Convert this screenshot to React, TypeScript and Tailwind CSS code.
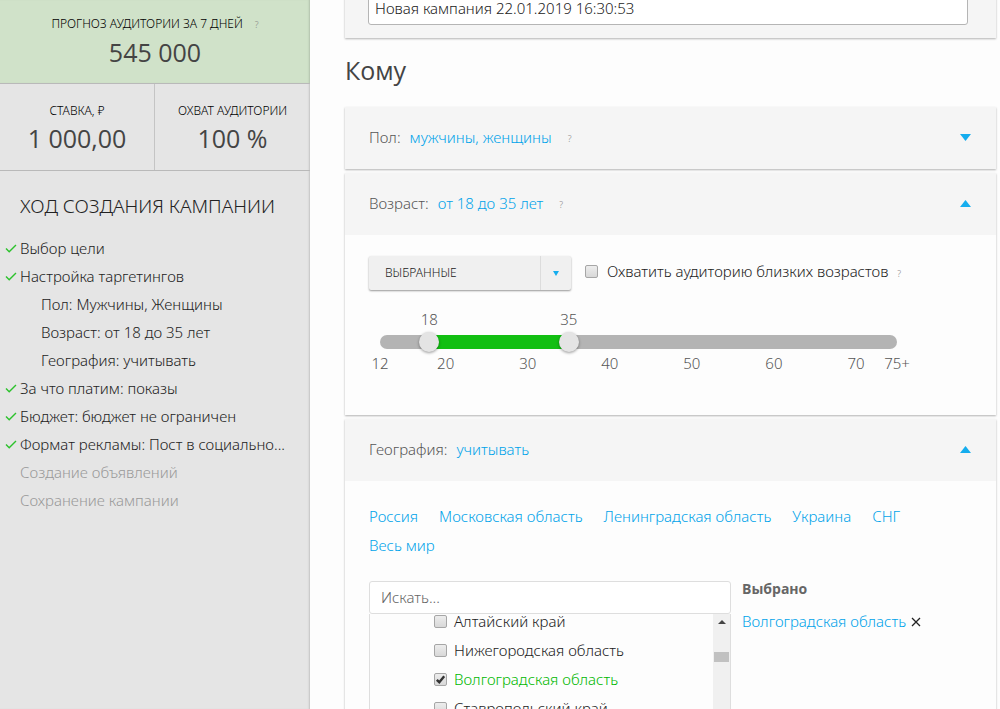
import React, { useState } from 'react';

interface Step {
  title: string;
  state: 'done' | 'sub' | 'todo';
}

const steps: Step[] = [
  { title: 'Выбор цели', state: 'done' },
  { title: 'Настройка таргетингов', state: 'done' },
  { title: 'Пол: Мужчины, Женщины', state: 'sub' },
  { title: 'Возраст: от 18 до 35 лет', state: 'sub' },
  { title: 'География: учитывать', state: 'sub' },
  { title: 'За что платим: показы', state: 'done' },
  { title: 'Бюджет: бюджет не ограничен', state: 'done' },
  { title: 'Формат рекламы: Пост в социально...', state: 'done' },
  { title: 'Создание объявлений', state: 'todo' },
  { title: 'Сохранение кампании', state: 'todo' },
];

const quickRegions = ['Россия', 'Московская область', 'Ленинградская область', 'Украина', 'СНГ', 'Весь мир'];

const regions = ['Алтайский край', 'Нижегородская область', 'Волгоградская область', 'Ставропольский край'];

const AGE_MIN = 12;
const AGE_MAX = 75;
const ticks = [12, 20, 30, 40, 50, 60, 70, 75];

const agePercent = (age: number) => ((age - AGE_MIN) / (AGE_MAX - AGE_MIN)) * 100;

const Hint = ({ className = '' }: { className?: string }) => (
  <span className={`text-[9px] text-[#858585] ${className}`}>?</span>
);

const CheckMark = () => (
  <svg className="w-3 h-3 shrink-0" viewBox="0 0 12 12" fill="none" stroke="#2cc22c" strokeWidth="1.4">
    <path d="M1 6.6 4.2 9.8 11 3" />
  </svg>
);

const Arrow = ({ up = false, className }: { up?: boolean; className: string }) => (
  <svg className={className} viewBox="0 0 12 8" fill="currentColor" preserveAspectRatio="none">
    <path d={up ? 'M0 8 6 0l6 8z' : 'M0 0h12L6 8z'} />
  </svg>
);

interface CheckboxProps {
  id: string;
  checked: boolean;
  onChange: () => void;
}

const Checkbox = ({ id, checked, onChange }: CheckboxProps) => (
  <span className="relative w-[13px] h-[13px] shrink-0">
    <input
      id={id}
      type="checkbox"
      checked={checked}
      onChange={onChange}
      className="block w-[13px] h-[13px] appearance-none rounded-[2px] border border-[#a6a6a6] bg-linear-to-b from-[#ededed] to-[#d8d8d8]"
    />
    {checked && (
      <svg className="absolute inset-0 w-[13px] h-[13px] pointer-events-none" viewBox="0 0 13 13" fill="none" stroke="#333" strokeWidth="2.4">
        <path d="M2.8 6.8 5.3 9.2 10.2 3.2" />
      </svg>
    )}
  </span>
);

interface PanelProps {
  label: string;
  value: string;
  hint?: boolean;
  open?: boolean;
  children?: React.ReactNode;
}

const Panel: React.FC<PanelProps> = ({ label, value, hint, open = false, children }) => (
  <section className="bg-[#fdfdfd] shadow-[0_1px_2px_rgba(0,0,0,0.3)]">
    <header className="h-[62px] pb-[2px] pl-6 pr-[25px] flex items-center bg-[#f5f5f5] text-[#555]">
      <span>{label}:</span>
      <button className="ml-[9px] text-[#00a3ea]">{value}</button>
      {hint && <Hint className="ml-4 mt-1" />}
      <button className="ml-auto text-[#15adee]" aria-label={open ? 'Свернуть' : 'Развернуть'}>
        <Arrow up={open} className="w-[11px] h-[7px]" />
      </button>
    </header>
    {children}
  </section>
);

const rangeClass =
  'absolute top-1/2 -translate-y-1/2 -left-[10px] w-[calc(100%+20px)] h-5 m-0 appearance-none bg-transparent pointer-events-none [&::-webkit-slider-thumb]:appearance-none [&::-webkit-slider-thumb]:pointer-events-auto [&::-webkit-slider-thumb]:w-5 [&::-webkit-slider-thumb]:h-5 [&::-webkit-slider-thumb]:rounded-full [&::-webkit-slider-thumb]:bg-[#e4e4e4] [&::-webkit-slider-thumb]:shadow-[0_1px_3px_rgba(0,0,0,0.4)]';

const AgeSlider = () => {
  const [from, setFrom] = useState(18);
  const [to, setTo] = useState(35);

  return (
    <div className="max-w-[517px] ml-[11px] text-[#555]">
      <div className="relative h-5 leading-5">
        {[from, to].map((age) => (
          <span key={age} className="absolute -translate-x-1/2" style={{ left: `${agePercent(age)}%` }}>
            {age}
          </span>
        ))}
      </div>
      <div className="relative h-[14px] mt-[6px] mb-[4px] rounded-full bg-[#b4b4b4]">
        <div
          className="absolute inset-y-0 bg-[#12bf12]"
          style={{ left: `${agePercent(from)}%`, right: `${100 - agePercent(to)}%` }}
        />
        <input
          type="range"
          aria-label="Возраст от"
          min={AGE_MIN}
          max={AGE_MAX}
          value={from}
          onChange={(e) => setFrom(Math.min(Number(e.target.value), to - 1))}
          className={rangeClass}
        />
        <input
          type="range"
          aria-label="Возраст до"
          min={AGE_MIN}
          max={AGE_MAX}
          value={to}
          onChange={(e) => setTo(Math.max(Number(e.target.value), from + 1))}
          className={rangeClass}
        />
      </div>
      <div className="relative h-5 leading-5">
        {ticks.map((age) => (
          <span key={age} className="absolute -translate-x-1/2" style={{ left: `${agePercent(age)}%` }}>
            {age === AGE_MAX ? '75+' : age}
          </span>
        ))}
      </div>
    </div>
  );
};

const Stat = ({ title, value, hint }: { title: string; value: string; hint?: boolean }) => (
  <>
    <div className="text-xs leading-[18px] text-black">
      {title}
      {hint && <Hint className="ml-3" />}
    </div>
    <div className="font-['Open_Sans',sans-serif] font-normal text-[25px] leading-9 text-[#444]">{value}</div>
  </>
);

const Sidebar = () => (
  <aside className="w-[310px] shrink-0 bg-[#e5e5e5] shadow-[inset_-2px_0_2px_-1px_rgba(0,0,0,0.15)]">
    <div className="h-[84px] pt-[15px] border-b border-[#b9b9b9] bg-[#d0e2c9] text-center shadow-[inset_-2px_0_2px_-1px_rgba(0,0,0,0.15)]">
      <Stat title="ПРОГНОЗ АУДИТОРИИ ЗА 7 ДНЕЙ" value="545 000" hint />
    </div>
    <div className="grid grid-cols-2 h-[87px] border-b border-[#b9b9b9] text-center">
      <div className="pt-[18px] border-r border-[#c4c4c4]">
        <Stat title="СТАВКА, ₽" value="1 000,00" />
      </div>
      <div className="pt-[18px]">
        <Stat title="ОХВАТ АУДИТОРИИ" value="100 %" />
      </div>
    </div>
    <h2 className="pt-[19px] pl-5 text-[19px] leading-8">ХОД СОЗДАНИЯ КАМПАНИИ</h2>
    <ul className="mt-3">
      {steps.map((step) => (
        <li key={step.title} className="h-7 flex items-center pl-[5px] gap-[3px] whitespace-nowrap">
          {step.state === 'done' ? <CheckMark /> : <span className="w-3 shrink-0" />}
          <span className={`${step.state === 'sub' ? 'pl-[21px]' : ''} ${step.state === 'todo' ? 'text-[#999]' : ''}`}>
            {step.title}
          </span>
        </li>
      ))}
    </ul>
  </aside>
);

const Geography = () => {
  const [selected, setSelected] = useState<string[]>(['Волгоградская область']);

  const toggle = (region: string) =>
    setSelected((prev) => (prev.includes(region) ? prev.filter((r) => r !== region) : [...prev, region]));

  return (
    <div className="px-6 pt-[21px]">
      <div className="flex flex-wrap gap-x-[21px] pr-6 leading-[29px]">
        {quickRegions.map((region) => (
          <a key={region} href="#" className="text-[#00a3ea]">{region}</a>
        ))}
      </div>
      <div className="mt-[21px] flex gap-[11px]">
        <div className="w-[362px] shrink-0">
          <input
            type="text"
            aria-label="Поиск региона"
            placeholder="Искать..."
            className="block w-full h-[33px] px-[11px] pb-[2px] rounded-[3px] border border-[#dedede] bg-white placeholder:text-[#666]"
          />
          <div className="h-[200px] flex justify-between overflow-hidden border-x border-[#dedede]">
            <ul className="-mt-[7px] pl-16">
              {regions.map((region, i) => (
                <li key={region} className="h-[29px] flex items-center gap-[7px]">
                  <Checkbox id={`region-${i}`} checked={selected.includes(region)} onChange={() => toggle(region)} />
                  <label htmlFor={`region-${i}`} className={selected.includes(region) ? 'text-[#00b800]' : ''}>
                    {region}
                  </label>
                </li>
              ))}
            </ul>
            <div className="w-[17px] flex flex-col items-center bg-[#f0f0f0]">
              <div className="h-[38px] pt-[6px] text-[#444]">
                <Arrow up className="w-2 h-1" />
              </div>
              <div className="w-[15px] h-[10px] bg-[#c1c1c1]" />
            </div>
          </div>
        </div>
        <div>
          <h3 className="font-['Open_Sans',sans-serif] font-bold text-sm leading-4 text-[#666]">Выбрано</h3>
          <ul className="mt-[10px]">
            {selected.map((region) => (
              <li key={region} className="h-[29px] flex items-center gap-[5px]">
                <a href="#" className="text-[#00a3ea]">{region}</a>
                <button aria-label="Удалить" onClick={() => toggle(region)}>
                  <svg className="w-[10px] h-[10px]" viewBox="0 0 10 10" stroke="#222" strokeWidth="1.3">
                    <path d="M1 1l8 8M9 1 1 9" />
                  </svg>
                </button>
              </li>
            ))}
          </ul>
        </div>
      </div>
    </div>
  );
};

const App: React.FC = () => {
  const [name, setName] = useState('Новая кампания 22.01.2019 16:30:53');
  const [nearAges, setNearAges] = useState(false);

  return (
    <div className="h-screen flex overflow-hidden bg-[#fdfdfd] font-['Noto_Sans','Open_Sans',sans-serif] font-[340] text-[15px] text-[#222]">
      <Sidebar />
      <main className="flex-1 min-w-0 pl-[35px] pr-1 overflow-hidden">
        <div className="-mt-2 pl-[23px] pr-7 pb-[13px] bg-[#f5f5f5] shadow-[0_1px_2px_rgba(0,0,0,0.3)]">
          <input
            type="text"
            aria-label="Название кампании"
            value={name}
            onChange={(e) => setName(e.target.value)}
            className="block w-full h-[33px] px-[6px] pb-[2px] rounded-[3px] border border-[#b5b5b5] bg-white"
          />
        </div>

        <h1 className="mt-3 mb-[17px] font-['Open_Sans',sans-serif] font-normal text-[25px] leading-10 text-[#444]">Кому</h1>

        <div className="flex flex-col gap-1">
          <Panel label="Пол" value="мужчины, женщины" hint />

          <Panel label="Возраст" value="от 18 до 35 лет" hint open>
            <div className="px-6 pt-[21px] pb-[42px]">
              <div className="flex items-center mb-[19px]">
                <div className="relative w-[202px]">
                  <select
                    aria-label="Возраст"
                    className="block w-full h-[34px] pl-4 appearance-none rounded-[2px] bg-[#f0f0f0] text-xs shadow-[0_1px_2px_rgba(0,0,0,0.4)]"
                  >
                    <option>ВЫБРАННЫЕ</option>
                    <option>ВСЕ</option>
                  </select>
                  <span className="absolute right-0 inset-y-0 w-[31px] flex items-center justify-center border-l border-[#dcdcdc] text-[#15adee] pointer-events-none">
                    <Arrow className="w-[6px] h-[5px]" />
                  </span>
                </div>
                <div className="ml-[14px] pb-[3px] flex items-center gap-[9px]">
                  <Checkbox id="near-ages" checked={nearAges} onChange={() => setNearAges(!nearAges)} />
                  <label htmlFor="near-ages">Охватить аудиторию близких возрастов</label>
                  <Hint className="mt-1" />
                </div>
              </div>
              <AgeSlider />
            </div>
          </Panel>

          <Panel label="География" value="учитывать" open>
            <Geography />
          </Panel>
        </div>
      </main>
    </div>
  );
};

export default App;
